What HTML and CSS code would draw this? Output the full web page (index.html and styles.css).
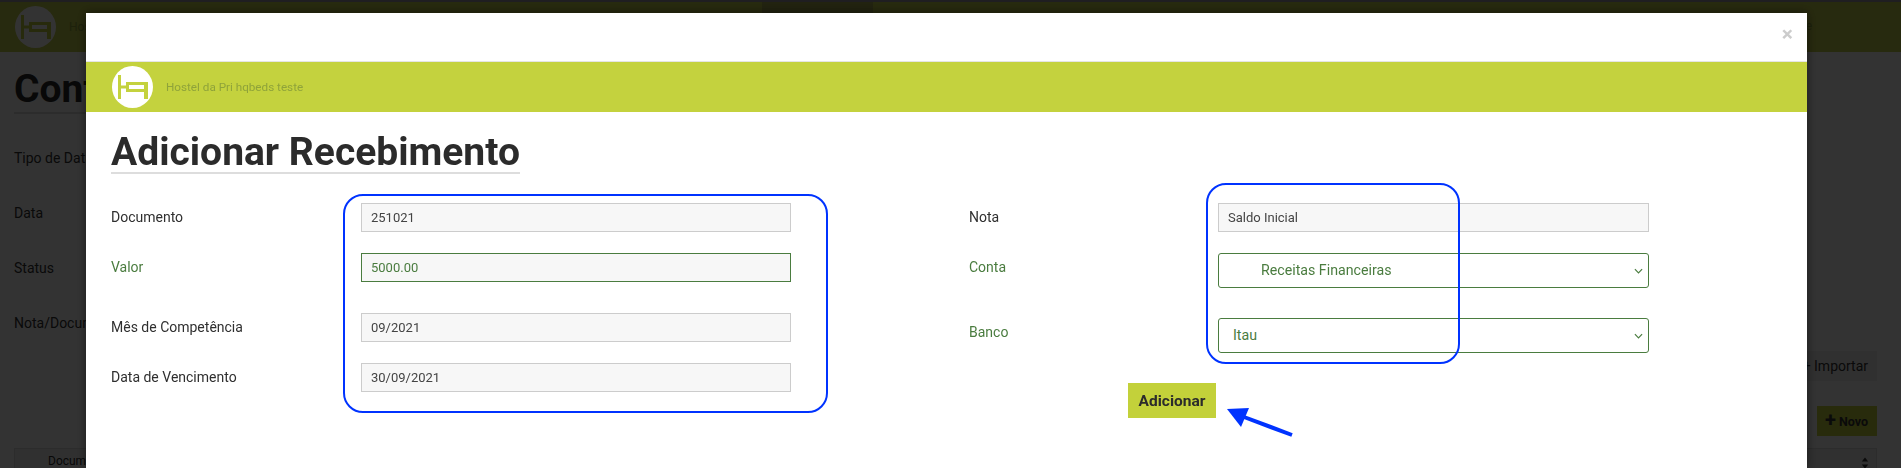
FILE: index.html
```html
<!DOCTYPE html>
<html lang="pt-BR">
<head>
<meta charset="utf-8">
<title>Adicionar Recebimento</title>
<link rel="stylesheet" href="styles.css">
</head>
<body>
<div class="page">
  <div class="topstrip"></div>
  <header class="navbar">
    <div class="nav-brand">
      <span class="logo">
        <svg viewBox="0 0 41 42" width="41" height="42"><path class="bed" d="M6 9h3v10.5h5V16h22v17h-4v-7H14V22.5H9V33H6zM17 19v4h15v-4z"/></svg>
      </span>
      <span class="nav-name">Hostel da Pri hqbeds teste</span>
    </div>
    <div class="nav-tab"></div>
    <span class="nav-user">e</span>
  </header>
  <main class="content">
    <h1 class="page-title">Contas</h1>
    <div class="filters">
      <div class="filter">Tipo de Data</div>
      <div class="filter">Data</div>
      <div class="filter">Status</div>
      <div class="filter">Nota/Docum.</div>
    </div>
    <div class="actions">
      <button class="act act-import">+ Importar</button>
      <button class="act act-new"><span class="plus">+</span> Novo</button>
    </div>
    <div class="thead">
      <span class="th-name">Documento</span>
      <svg class="sort" viewBox="0 0 10 14" width="8" height="12"><path d="M5 0l4 5H1zM5 14L1 9h8z"/></svg>
    </div>
  </main>
</div>

<div class="backdrop"></div>

<section class="modal">
  <div class="modal-top"><span class="close">×</span></div>
  <div class="band">
    <span class="logo">
      <svg viewBox="0 0 41 42" width="41" height="42"><path class="bed" d="M6 9h3v10.5h5V16h22v17h-4v-7H14V22.5H9V33H6zM17 19v4h15v-4z"/></svg>
    </span>
    <span class="band-name">Hostel da Pri hqbeds teste</span>
  </div>
  <div class="modal-body">
    <h2 class="modal-title">Adicionar Recebimento</h2>
    <form class="form">
      <div class="col col-left">
        <div class="row r-doc"><label class="lbl">Documento</label><div class="field">251021</div></div>
        <div class="row r-val ok"><label class="lbl">Valor</label><div class="field">5000.00</div></div>
        <div class="row r-mes"><label class="lbl">Mês de Competência</label><div class="field">09/2021</div></div>
        <div class="row r-venc"><label class="lbl">Data de Vencimento</label><div class="field">30/09/2021</div></div>
      </div>
      <div class="col col-right">
        <div class="row r-doc"><label class="lbl">Nota</label><div class="field">Saldo Inicial</div></div>
        <div class="row r-conta ok">
          <label class="lbl">Conta</label>
          <div class="select select-indent">Receitas Financeiras
            <svg class="chev" viewBox="0 0 10 6" width="9" height="6"><path d="M1 1l4 4 4-4"/></svg>
          </div>
        </div>
        <div class="row r-banco ok">
          <label class="lbl">Banco</label>
          <div class="select">Itau
            <svg class="chev" viewBox="0 0 10 6" width="9" height="6"><path d="M1 1l4 4 4-4"/></svg>
          </div>
        </div>
      </div>
    </form>
    <div class="submit-row"><button class="submit" type="button">Adicionar</button></div>
  </div>
</section>

<div class="note note-left"></div>
<div class="note note-right"></div>
<svg class="note-arrow" viewBox="0 0 70 34" width="70" height="34">
  <path class="arrow-line" d="M18 11L66 29"/>
  <path class="arrow-head" d="M1 3L23 2 15 21z"/>
</svg>
</body>
</html>
```
FILE: styles.css
```css
* { box-sizing: border-box; }
html, body { margin: 0; height: 468px; overflow: hidden; }
body { font-family: Roboto, "Liberation Sans", sans-serif; font-size: 14px; color: #2b2b2b; background: #fff; }

.page { height: 468px; display: flex; flex-direction: column; background: #fff; }
.topstrip { height: 2px; background: #9a94a6; }
.navbar { height: 50px; background: #c3cf4a; display: flex; position: relative; padding: 0 89px 0 15px; justify-content: space-between; align-items: center; }
.nav-brand { display: flex; align-items: center; gap: 13px; }
.nav-name { font-size: 12px; color: #8fa33a; white-space: nowrap; }
.nav-user { font-size: 12px; color: #8fa33a; margin-top: -2px; }
.nav-tab { position: absolute; left: 762px; top: 0; width: 111px; height: 11px; background: #a8ad50; }

.content { flex: 1; padding: 16px 24px 0 14px; position: relative; }
.page-title { margin: 0; font-size: 39px; line-height: 43px; font-weight: 700; color: #2b2b2b; width: 380px; white-space: nowrap; border-bottom: 2px solid #ddd; height: 46px; }
.filters { margin-top: 34px; width: fit-content; }
.filter { color: #333; height: 55px; line-height: 20px; font-size: 14px; width: fit-content; white-space: nowrap; }

.actions { position: absolute; right: 24px; top: 299px; display: flex; flex-direction: column; align-items: flex-end; gap: 25px; }
.act { border: 0; height: 30px; font: 14px Roboto, sans-serif; color: #333; padding: 0 9px; }
.act-import { background: #f0f0f0; width: 100px; text-align: right; }
.act-new { background: #c5d43f; width: 60px; font-weight: 700; font-size: 12.5px; padding: 0 0 0 8px; white-space: nowrap; text-align: left; }
.plus { font-size: 20px; line-height: 14px; vertical-align: -1px; }

.thead { position: absolute; left: 14px; right: 24px; top: 396px; height: 24px; background: #f0f0f0; border: 1px solid #ddd; padding: 5px 0 0 33px; font-size: 12px; }
.sort { position: absolute; right: 7px; top: 8px; fill: #333; }

.backdrop { position: fixed; inset: 0; background: rgba(0,0,0,.8); }

.modal { position: fixed; left: 86px; top: 13px; width: 1721px; height: 455px; background: #fff; overflow: hidden; box-shadow: 0 0 10px rgba(0,0,0,.5); }
.modal-top { height: 49px; border-bottom: 1px solid #e5e5e5; display: flex; justify-content: flex-end; padding: 8px 14px 0 0; }
.close { font-size: 21px; line-height: 26px; font-weight: 700; color: #ccc; }

.logo { width: 41px; height: 42px; border-radius: 50%; background: #fff; display: block; flex: none; }
.logo svg { display: block; }
.bed { fill-rule: evenodd; fill: #c4d23e; }
.band { height: 50px; background: #c4d23e; display: flex; align-items: center; padding-left: 26px; gap: 13px; }
.band-name { font-size: 11.7px; color: #8fa33a; white-space: nowrap; }

.modal-body { padding: 22px 0 0 25px; }
.modal-title { margin: 0; display: inline-block; font-size: 39px; line-height: 37px; font-weight: 700; color: #2b2b2b; border-bottom: 2px solid #ddd; height: 40px; white-space: nowrap; }

.form { display: flex; margin-top: 29px; }
.col { display: flex; flex-direction: column; }
.col-left { width: 680px; margin-right: 178px; }
.col-right { width: 680px; }
.row { display: flex; align-items: flex-start; }
.lbl { width: 250px; flex: none; line-height: 20px; padding-top: 4px; font-size: 14px; color: #2f2f2f; }
.col-right .lbl { width: 249px; }
.field { width: 430px; height: 29px; background: #f7f7f7; border: 1px solid #ccc; padding: 0 9px; line-height: 27px; font-size: 13px; color: #444; }
.r-val { margin-top: 21px; }
.r-mes { margin-top: 31px; }
.r-venc { margin-top: 21px; }
.r-conta { margin-top: 21px; }
.r-banco { margin-top: 30px; }
.ok .lbl, .ok .field, .ok .select { color: #4a7c3f; }
.ok .field { border-color: #4a7c3f; }
.col-right .field { width: 431px; }
.select { width: 431px; height: 35px; background: #fff; border: 1px solid #4a7c3f; border-radius: 3px; padding: 0 14px; line-height: 33px; font-size: 14.2px; position: relative; }
.select-indent { padding-left: 42px; }
.chev { position: absolute; right: 5px; top: 14px; fill: none; stroke: #4a7c3f; stroke-width: 1.3; }

.submit-row { margin: -9px 0 0 1017px; }
.submit { width: 88px; height: 35px; border: 0; background: #c3d13a; color: #2b2b2b; font: 700 15.5px Roboto, sans-serif; padding: 0; }

.note { position: fixed; border: 2px solid #0033ff; border-radius: 20px; }
.note-left { left: 343px; top: 194px; width: 485px; height: 219px; }
.note-right { left: 1206px; top: 183px; width: 254px; height: 181px; }
.note-arrow { position: fixed; left: 1226px; top: 406px; }
.arrow-line { stroke: #0033ff; stroke-width: 4; fill: none; }
.arrow-head { fill: #0033ff; }
```
